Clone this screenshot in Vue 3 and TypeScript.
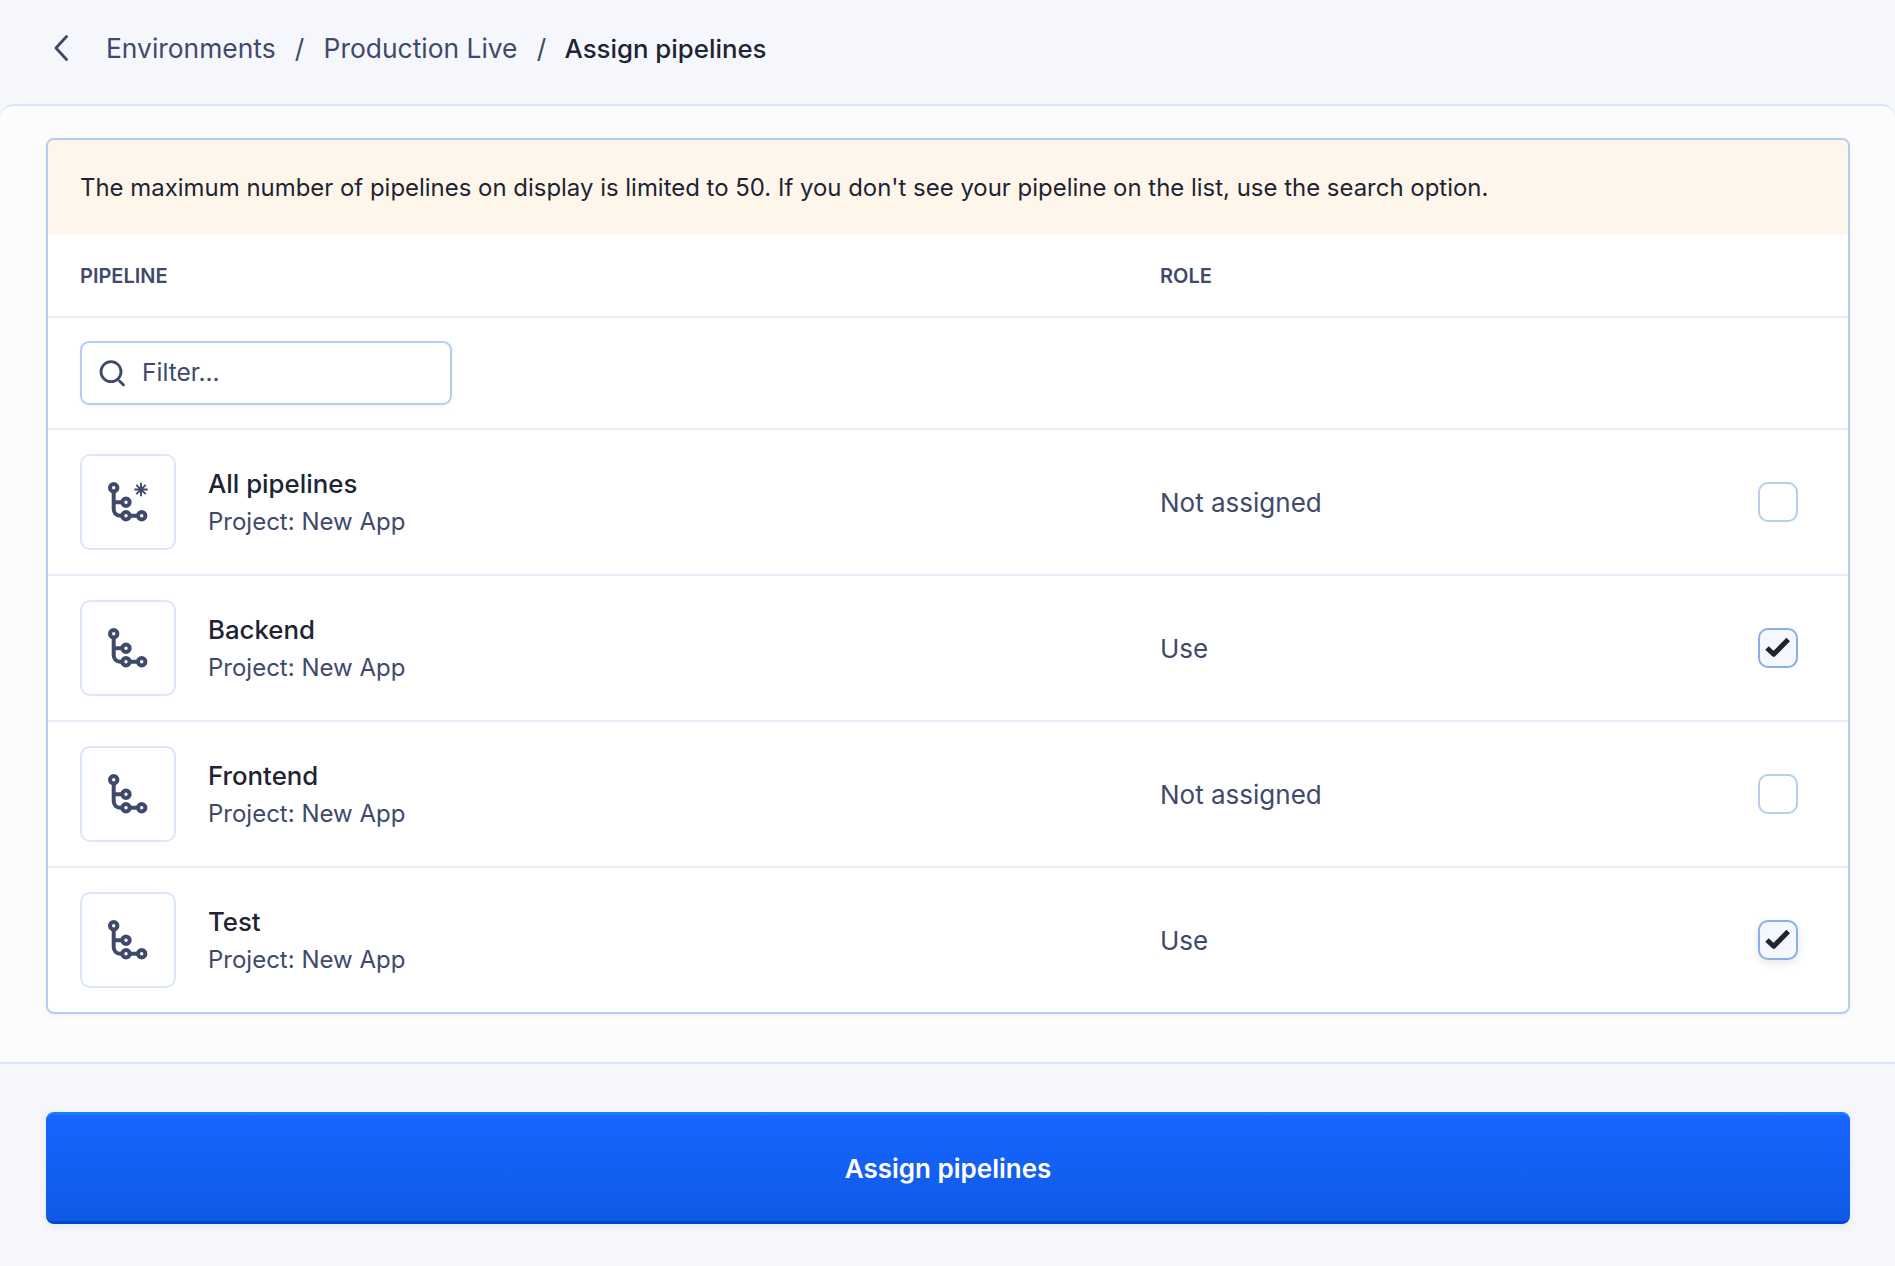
<template>
    <div class="page">
        <header class="crumbs">
            <svg class="back" width="14" height="26" viewBox="0 0 14 26" fill="none">
                <path d="M12.5 1.5 2 13l10.5 11.5" stroke="#3f4a6b" stroke-width="2.8" stroke-linecap="round" stroke-linejoin="round" />
            </svg>
            <a class="crumb">Environments</a>
            <span class="sep">/</span>
            <a class="crumb">Production Live</a>
            <span class="sep">/</span>
            <span class="crumb current">Assign pipelines</span>
        </header>

        <main class="panel">
            <section class="card">
                <div class="notice">
                    The maximum number of pipelines on display is limited to 50. If you don't see your pipeline on the list, use the search option.
                </div>
                <div class="head row-grid">
                    <span>PIPELINE</span>
                    <span>ROLE</span>
                </div>
                <div class="filter-row">
                    <label class="filter">
                        <svg width="28" height="28" viewBox="0 0 28 28" fill="none">
                            <circle cx="12" cy="12.7" r="10" stroke="#3f4a6b" stroke-width="2.8" />
                            <path d="M20.5 22 24.5 26" stroke="#3f4a6b" stroke-width="2.8" stroke-linecap="round" />
                        </svg>
                        <span class="placeholder">Filter...</span>
                    </label>
                </div>
                <div v-for="(item, i) in pipelines" :key="item.name" class="pipeline row-grid">
                    <div class="info">
                        <div class="icon-box">
                            <svg width="48" height="48" viewBox="0 0 48 48" fill="none" stroke="#3f4a6b" stroke-width="4">
                                <path d="M9.7 13V31c0 4 2.7 6.7 6.5 6.7h2M9.7 24.3h8.5M25.8 37.7h8.100" />
                                <circle cx="9.7" cy="9.7" r="3.7" />
                                <circle cx="22" cy="24.3" r="3.7" />
                                <circle cx="22" cy="37.7" r="3.7" />
                                <circle cx="37.7" cy="37.7" r="3.7" />
                                <path v-if="item.all" stroke-width="1.9" d="M37 4.800v13.400M30.300 11.500h13.400M32.300 6.800l9.400 9.400M41.700 6.800l-9.400 9.400" />
                            </svg>
                        </div>
                        <div>
                            <div class="name">{{ item.name }}</div>
                            <div class="project">Project: New App</div>
                        </div>
                    </div>
                    <div class="role">{{ item.role }}</div>
                    <span :class="['check', { checked: item.role === 'Use', focused: i === 3 }]">
                        <svg v-if="item.role === 'Use'" width="40" height="40" viewBox="0 0 40 40" fill="none">
                            <path d="M9 20l6.700 6.300 14.500-14.800" stroke="#1e2433" stroke-width="5" stroke-linejoin="round" />
                        </svg>
                    </span>
                </div>
            </section>
        </main>

        <footer class="actions">
            <button class="assign">Assign pipelines</button>
        </footer>
    </div>
</template>

<script setup lang="ts">
interface Pipeline {
    name: string
    role: string
    all?: boolean
}

const pipelines: Pipeline[] = [
    { name: 'All pipelines', role: 'Not assigned', all: true },
    { name: 'Backend', role: 'Use' },
    { name: 'Frontend', role: 'Not assigned' },
    { name: 'Test', role: 'Use' },
];
</script>

<style>
html,
body {
    margin: 0;
    background: #f6f7fc;
}
</style>

<style scoped>
.page {
    min-height: 1266px;
    font-family: Inter, "Liberation Sans", sans-serif;
    color: #3f4a6b;
    font-size: 26px;
}

.crumbs {
    display: flex;
    align-items: center;
    height: 104px;
    padding: 0 0 8px 54px;
    box-sizing: border-box;
    font-size: 26.4px;
}

.back {
    margin-right: 38px;
}

.sep {
    width: 48px;
    text-align: center;
}

.crumb.current {
    margin-left: -1px;
    color: #1e2433;
    font-weight: 500;
    font-size: 25.8px;
}

.panel {
    padding: 32px 45px 48px 46px;
    background: #fcfcfd;
    border-top: 2px solid #dbe6f7;
    border-bottom: 2px solid #dbe6f7;
    border-radius: 14px 14px 0 0;
}

.card {
    background: #fff;
    border: 2px solid #b5cdf0;
    border-radius: 8px;
    overflow: hidden;
    box-shadow: 0 2px 4px rgba(63, 74, 107, 0.05);
}

.notice {
    height: 95px;
    display: flex;
    align-items: center;
    padding-left: 32px;
    background: #fff6eb;
    color: #1e2433;
    font-size: 23.94px;
}

.row-grid {
    display: grid;
    grid-template-columns: 1080px 1fr 40px;
    align-items: center;
    padding: 0 50px 0 32px;
    border-bottom: 2px solid #e9effa;
}

.head {
    height: 81px;
    font-size: 20px;
    font-weight: 600;
}

.filter-row {
    height: 112px;
    display: flex;
    align-items: center;
    padding-left: 32px;
    border-bottom: 2px solid #e9effa;
    box-sizing: border-box;
}

.filter {
    display: flex;
    align-items: center;
    gap: 15px;
    width: 372px;
    height: 64px;
    padding-left: 17px;
    box-sizing: border-box;
    border: 2px solid #b5cdf0;
    border-radius: 9px;
    font-size: 24.5px;
    box-shadow: 0 2px 4px rgba(63, 74, 107, 0.06);
}

.placeholder {
    margin-top: -2px;
}

.pipeline {
    height: 146px;
    box-sizing: border-box;
}

.pipeline:last-child {
    height: 144px;
    border-bottom: 0;
}

.info {
    display: flex;
    align-items: center;
    gap: 32px;
}

.icon-box {
    width: 96px;
    height: 96px;
    box-sizing: border-box;
    display: flex;
    align-items: center;
    justify-content: center;
    border: 2px solid #dbe6f7;
    border-radius: 10px;
}

.name {
    color: #1e2433;
    font-size: 25.8px;
    font-weight: 500;
    line-height: 37px;
}

.project {
    margin-top: 1px;
    margin-bottom: -1px;
    font-size: 24px;
    line-height: 38px;
}

.check {
    width: 40px;
    height: 40px;
    box-sizing: border-box;
    border: 2px solid #b5cdf0;
    border-radius: 10px;
    display: block;
}

.check svg {
    display: block;
    margin: -2px;
}

.check.checked {
    border-color: #8aaee6;
    background: #f5f7ff;
}

.check.focused {
    box-shadow: 0 3px 8px rgba(63, 74, 107, 0.14);
}

.actions {
    padding: 48px 45px 41px 46px;
}

.assign {
    display: block;
    width: 100%;
    height: 112px;
    border: 0;
    border-top: 3px solid #1a7dff;
    border-bottom: 3px solid #0047d6;
    border-radius: 8px;
    background: linear-gradient(#1766ff, #0f59e6);
    color: #fff;
    font: 600 26px Inter, "Liberation Sans", sans-serif;
    box-shadow: 0 2px 6px rgba(63, 74, 107, 0.1);
}
</style>
